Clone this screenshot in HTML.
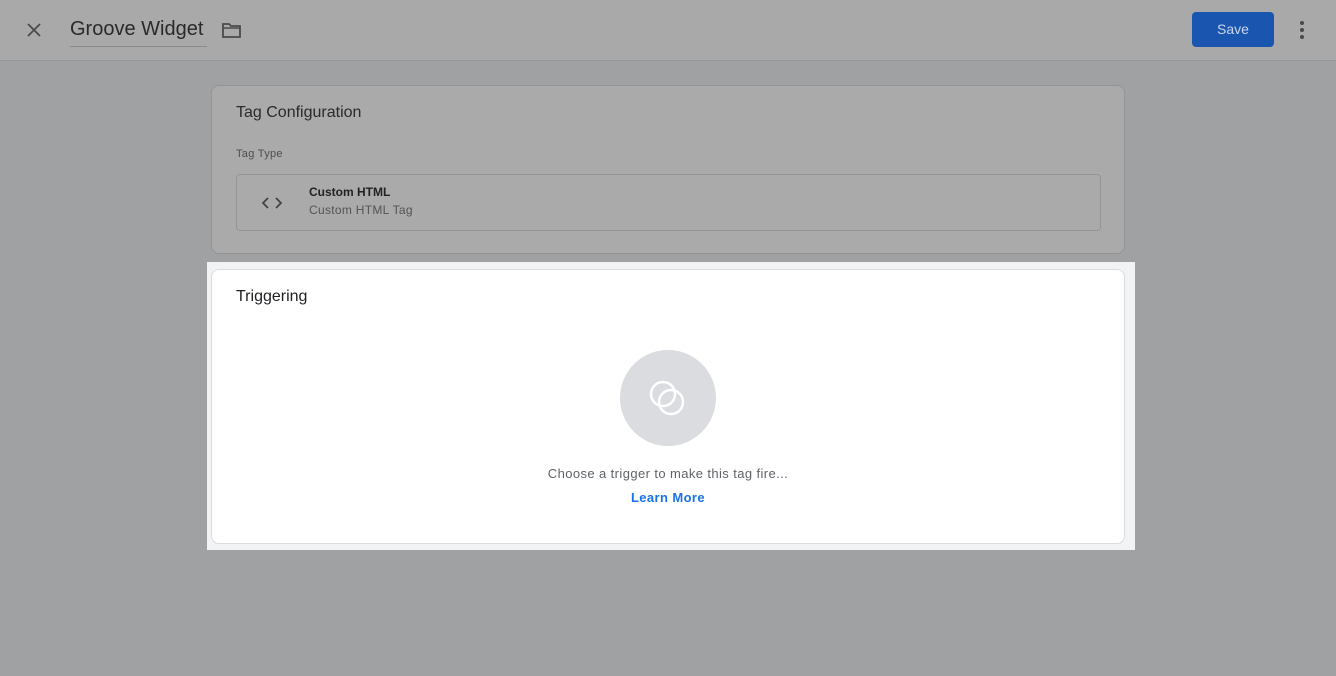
<!DOCTYPE html>
<html><head><style>
*{margin:0;padding:0;box-sizing:border-box}
body{width:1336px;height:676px;background:#a0a1a3;font-family:"Liberation Sans",Arial,sans-serif;position:relative;overflow:hidden}
.hdr{position:absolute;left:0;top:0;width:1336px;height:61px;background:#a9a9a9;border-bottom:1px solid #979899}
.title{position:absolute;left:70px;top:18px;font-size:20px;color:#2a2a2a;padding-bottom:5px;border-bottom:1px solid #8a8a8a;width:137px}
.save{position:absolute;left:1192px;top:12px;width:82px;height:35px;background:#1a56b0;border-radius:4px;color:#c9d6ea;font-size:14px;text-align:center;line-height:35px}
.card1{position:absolute;left:211px;top:85px;width:914px;height:169px;border:1px solid #959595;border-radius:8px;background:#aaaaaa}
.hl{position:absolute;left:207px;top:262px;width:928px;height:288px;background:#f1f3f4}
.card2{position:absolute;left:211px;top:269px;width:914px;height:275px;border:1px solid #dadce0;border-radius:8px;background:#fff}
</style></head><body>
<div class="hdr">
<svg style="position:absolute;left:26px;top:22px" width="16" height="16" viewBox="0 0 16 16"><path d="M2 2L14 14M14 2L2 14" stroke="#4a4a4a" stroke-width="1.8"/></svg>
<div class="title">Groove Widget</div>
<svg style="position:absolute;left:221px;top:22px" width="21" height="17" viewBox="0 0 21 17"><path d="M2 2h6l2 2h9v11H2z" fill="none" stroke="#4a4a4a" stroke-width="1.8"/><path d="M2 6h17" stroke="#4a4a4a" stroke-width="1.5"/></svg>
<div class="save">Save</div>
<svg style="position:absolute;left:1298px;top:20px" width="8" height="20"><circle cx="4" cy="3" r="2" fill="#4a4a4a"/><circle cx="4" cy="10" r="2" fill="#4a4a4a"/><circle cx="4" cy="17" r="2" fill="#4a4a4a"/></svg>
</div>
<div class="card1">
<div style="position:absolute;left:24px;top:18px;font-size:16px;color:#2a2a2a">Tag Configuration</div>
<div style="position:absolute;left:24px;top:62px;font-size:11px;letter-spacing:0.3px;color:#4e4e4e">Tag Type</div>
<div style="position:absolute;left:24px;top:88px;width:865px;height:57px;border:1px solid #959595;border-radius:4px">
<svg style="position:absolute;left:24px;top:21px" width="22" height="14"><path d="M7 2L2 7l5 5M15 2l5 5-5 5" fill="none" stroke="#444" stroke-width="1.8"/></svg>
<div style="position:absolute;left:72px;top:10px;font-size:12px;font-weight:bold;color:#222">Custom HTML</div>
<div style="position:absolute;left:72px;top:28px;font-size:12px;letter-spacing:0.3px;color:#545454">Custom HTML Tag</div>
</div></div>
<div class="hl"></div>
<div class="card2">
<div style="position:absolute;left:24px;top:18px;font-size:16px;color:#202124">Triggering</div>
<svg style="position:absolute;left:408px;top:80px" width="96" height="96"><circle cx="48" cy="48" r="48" fill="#dadce0"/><circle cx="43" cy="44" r="12" fill="none" stroke="#fff" stroke-width="2.5"/><circle cx="51" cy="52" r="12" fill="none" stroke="#fff" stroke-width="2.5"/></svg>
<div style="position:absolute;left:0;width:912px;top:196px;text-align:center;font-size:13px;letter-spacing:0.4px;color:#5f6368">Choose a trigger to make this tag fire...</div>
<div style="position:absolute;left:0;width:912px;top:220px;text-align:center;font-size:13px;letter-spacing:0.4px;color:#1a73e8;font-weight:bold">Learn More</div>
</div>
</body></html>
